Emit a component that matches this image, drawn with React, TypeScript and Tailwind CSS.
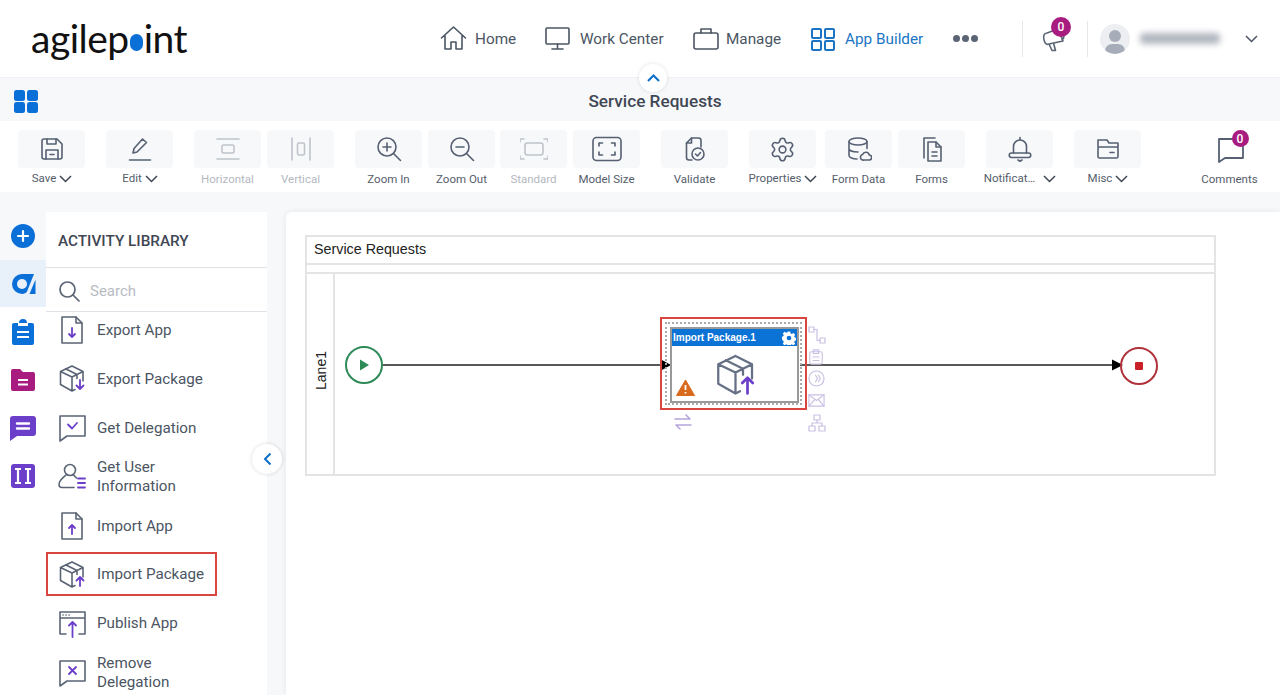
import React from "react";
import { Settings } from "lucide-react";

const S = ({ size = 24, vb, sw = 1.6, className = "", children }: { size?: number; vb?: number; sw?: number; className?: string; children: React.ReactNode }) => (
  <svg width={size} height={size} viewBox={`0 0 ${vb ?? size} ${vb ?? size}`} fill="none" stroke="currentColor" strokeWidth={sw} strokeLinecap="round" strokeLinejoin="round" className={`shrink-0 ${className}`}>
    {children}
  </svg>
);

const Chevron = ({ className = "", sw = 1.5 }: { className?: string; sw?: number }) => (
  <svg width="13" height="8" viewBox="0 0 13 8" fill="none" stroke="currentColor" strokeWidth={sw} className={className}>
    <path d="M1 1l5.500 5.500L12 1" />
  </svg>
);

const toolIcons: Record<string, React.ReactNode> = {
  save: <S size={26}><path d="M3 5a2 2 0 0 1 2-2h13l5 5v13a2 2 0 0 1-2 2H5a2 2 0 0 1-2-2z" /><path d="M8 3v5h9V3" /><path d="M7 23v-9h12v9" /><path d="M11 18.500h4" /></S>,
  edit: <S size={26}><path d="M6 17l1-4.500L15.500 3l4 3.500L10 16z" /><path d="M2.500 24h21" /></S>,
  horizontal: <S size={26}><path d="M2 3h22M2 23h22" /><rect x="7" y="9" width="12" height="8" rx="1.500" /></S>,
  vertical: <S size={26}><path d="M4 2v22M22 2v22" /><rect x="9.500" y="7" width="7" height="12" rx="1.500" /></S>,
  zoomIn: <S size={28}><circle cx="12" cy="12" r="9" /><path d="M18.500 18.500l7 7M12 8v8M8 12h8" /></S>,
  zoomOut: <S size={28}><circle cx="12" cy="12" r="9" /><path d="M18.500 18.500l7 7M8 12h8" /></S>,
  standard: <S size={28}><path d="M0 7V4h4M24 4h4v3M28 21v3h-4M4 24H0v-3" /><rect x="5" y="8" width="18" height="12" rx="2.500" /></S>,
  model: <S size={30}><rect x="1" y="3.500" width="28" height="23" rx="3.500" /><path d="M7 12V9h3.500M19.500 9H23v3M23 18v3h-3.500M10.500 21H7v-3" /></S>,
  validate: <S size={26}><path d="M10 24H7a2.500 2.500 0 0 1-2.500-2.500V7L9.500 2h7a2.500 2.500 0 0 1 2.500 2.500V11" /><path d="M9.500 2v5h-5" /><circle cx="16" cy="18" r="6" /><path d="M13.500 18l2 2 3-3.500" /></S>,
  properties: <Settings size={27} strokeWidth={1.4} />,
  formData: <S size={26}><ellipse cx="12" cy="5.500" rx="9" ry="3.500" /><path d="M3 5.500v14c0 2 3.800 3.500 8 3.500M21 5.500v7M3 12.500c0 2 3.800 3.500 9 3.500" /><path d="M18 24h5a2.500 2.500 0 0 0 .3-5 3.500 3.500 0 0 0-6.700-.5A2.800 2.800 0 0 0 18 24z" /></S>,
  forms: <S size={26}><path d="M9 6h8l5 5v14H9z" /><path d="M17 6v5h5" /><path d="M5 22V2h11M13 16h5M13 20h5" /></S>,
  bell: <S size={26}><path d="M13 1.500V4M6.500 17v-6.500a6.500 6.500 0 0 1 13 0V17" /><path d="M4.500 17h17a2 2 0 0 1 0 4.500h-17a2 2 0 0 1 0-4.500z" /><path d="M11 24l2 1.200 2-1.200" /></S>,
  misc: <S size={26}><path d="M3 11V4h9l2 3h9v4" /><rect x="3" y="11" width="20" height="11" rx="1.500" /><path d="M15 16.500h4" /></S>,
};

const tools = [
  { k: "save", label: "Save", caret: true, ml: "ml-[18px]" },
  { k: "edit", label: "Edit", caret: true, ml: "ml-[21px]" },
  { k: "horizontal", label: "Horizontal", off: true, ml: "ml-[21px]" },
  { k: "vertical", label: "Vertical", off: true, ml: "ml-[6px]" },
  { k: "zoomIn", label: "Zoom In", ml: "ml-[21px]" },
  { k: "zoomOut", label: "Zoom Out", ml: "ml-[6px]" },
  { k: "standard", label: "Standard", off: true, ml: "ml-[5px]" },
  { k: "model", label: "Model Size", ml: "ml-[6px]" },
  { k: "validate", label: "Validate", ml: "ml-[21px]" },
  { k: "properties", label: "Properties", caret: true, ml: "ml-[21px]" },
  { k: "formData", label: "Form Data", ml: "ml-[9px]" },
  { k: "forms", label: "Forms", ml: "ml-[6px]" },
  { k: "bell", label: "Notificat…", caret: true, wide: true, ml: "ml-[21px]" },
  { k: "misc", label: "Misc", caret: true, ml: "ml-[21px]" },
];

const Violet = "#6b3fc9";
const Box = () => <path d="M15 2l11 5.500V17M15 2L3.500 7.500v13L15 27l3-1.500M3.500 7.500L15 13l11-5.500M15 13v14M8.500 4.800L20 10.500v4" />;

const libIcons: Record<string, React.ReactNode> = {
  exportApp: <S size={28}><path d="M4 1h14l6 6v20H4z" /><path d="M18 1v6h6" /><path d="M14 12v9M11 18l3 3 3-3" stroke={Violet} strokeWidth={1.8} /></S>,
  exportPkg: <S size={30}><Box /><path d="M23 16v9M19.500 21.500l3.500 3.500 3.500-3.500" stroke={Violet} strokeWidth={1.8} /></S>,
  getDel: <S size={30}><path d="M3 3h25v20H10l-7 5z" /><path d="M11 11.500l4 4 5-5.500" stroke={Violet} strokeWidth={1.8} /></S>,
  user: <S size={30}><circle cx="13" cy="8" r="5.500" /><path d="M9 13c-2 2-7 5-7 9.500 0 2 1.500 3 3 3h12M16.500 13l3 3" /><path d="M21 16.500h7M21 21h7M21 25.500h7" stroke={Violet} strokeWidth={1.8} /></S>,
  importApp: <S size={28}><path d="M4 1h14l6 6v20H4z" /><path d="M18 1v6h6" /><path d="M14 22v-9M11 16l3-3 3 3" stroke={Violet} strokeWidth={1.8} /></S>,
  importPkg: <S size={30}><Box /><path d="M23 26v-9M19.500 20.500l3.500-3.500 3.500 3.500" stroke={Violet} strokeWidth={1.8} /></S>,
  publish: <S size={30}><path d="M9 25H3V3h25v22h-6M3 9h25" /><path d="M6 6h.1M9 6h.1M12 6h.1" /><path d="M15.500 28V13M12 16.500l3.500-3.500 3.500 3.500" stroke={Violet} strokeWidth={1.8} /></S>,
  removeDel: <S size={30}><path d="M3 3h25v20H10l-7 5z" /><path d="M12 9l7 7M19 9l-7 7" stroke={Violet} strokeWidth={1.8} /></S>,
};

const lib = [
  { k: "exportApp", t: ["Export App"] },
  { k: "exportPkg", t: ["Export Package"] },
  { k: "getDel", t: ["Get Delegation"] },
  { k: "user", t: ["Get User", "Information"] },
  { k: "importApp", t: ["Import App"] },
  { k: "importPkg", t: ["Import Package"] },
  { k: "publish", t: ["Publish App"] },
  { k: "removeDel", t: ["Remove", "Delegation"] },
];

const NavItem = ({ icon, label, className = "" }: { icon: React.ReactNode; label: string; className?: string }) => (
  <div className={`flex items-center text-[15.300px] ${className}`}>
    {icon}
    <span className="mt-[2px]">{label}</span>
  </div>
);

const Badge = ({ className = "" }: { className?: string }) => (
  <span className={`absolute flex items-center justify-center rounded-full bg-[#a81c80] text-[12px] font-medium text-white ${className}`}>0</span>
);

export default function App() {
  return (
    <div className="relative h-[695px] w-[1280px] overflow-hidden bg-white text-[#4b5563] font-['Roboto',sans-serif]">
      {/* top nav */}
      <header className="flex h-[77px] items-center bg-white">
        <div className="ml-[31px] flex w-[156px] items-center text-[39px] leading-none tracking-[-0.5px] text-[#111] font-['Lato',sans-serif] font-normal">
          agilep
          <span className="mx-[1px] mt-[7px] inline-block h-[17px] w-[17px] rounded-full bg-[#0b6fd8]" />
          int
        </div>
        <NavItem className="ml-[253px] w-[77px] gap-[8px]" label="Home" icon={<S size={27} sw={1.6}><path d="M1.500 13L13.500 2l12 11M5 11v13h6v-7h5v7h6V11" /></S>} />
        <NavItem className="ml-[28px] w-[119px] gap-[10px]" label="Work Center" icon={<S size={25}><rect x="1" y="2" width="23" height="16" rx="1" /><path d="M12.500 18v5M7 23h11" /></S>} />
        <NavItem className="ml-[29px] w-[89px] gap-[7px]" label="Manage" icon={<S size={26}><rect x="1" y="7" width="24" height="16" rx="2" /><path d="M8 7V3h10v4" /></S>} />
        <NavItem className="ml-[29px] w-[113px] gap-[10px] text-[#1b75c4]" label="App Builder" icon={<S size={24} sw={2}><rect x="1" y="2" width="9" height="9" rx="1" /><rect x="14" y="2" width="9" height="9" rx="1" /><rect x="1" y="14" width="9" height="9" rx="1" /><rect x="14" y="14" width="9" height="9" rx="1" /></S>} />
        <div className="ml-[29px] flex gap-[2px]">
          <span className="h-[7px] w-[7px] rounded-full bg-[#5b6475]" />
          <span className="h-[7px] w-[7px] rounded-full bg-[#5b6475]" />
          <span className="h-[7px] w-[7px] rounded-full bg-[#5b6475]" />
        </div>
        <div className="ml-[44px] h-[36px] w-px bg-[#e6e7ea]" />
        <div className="relative ml-[19px] text-[#5b6475]">
          <S size={26}><path d="M5 7c-3 0-4 3-3 7s3 5 5 4L21 15 16 3zM7 18l3 6.500h3.500L11.500 17M18.500 7.500c3.500 0 4.500 4.500 1.500 6" /></S>
          <Badge className="left-[9px] top-[-9px] h-[20px] w-[20px]" />
        </div>
        <div className="ml-[19px] h-[36px] w-px bg-[#e6e7ea]" />
        <div className="relative ml-[12px] h-[30px] w-[30px] overflow-hidden rounded-full bg-[#eceef1]">
          <span className="absolute left-[9px] top-[6px] h-[12px] w-[12px] rounded-full bg-[#a7adb8]" />
          <span className="absolute left-[5px] top-[20px] h-[14px] w-[20px] rounded-full bg-[#a7adb8]" />
        </div>
        <div className="ml-[10px] h-[11px] w-[80px] rounded bg-[#8f96a3] opacity-70 blur-[3px]" />
        <Chevron className="ml-[25px] text-[#4b5563]" />
      </header>

      {/* title bar */}
      <div className="relative flex h-[44px] items-center justify-center border-t border-[#eef0f3] bg-[#f7f8fa] pl-[30px] pt-[5px]">
        <svg width="24" height="24" viewBox="0 0 24 24" className="absolute left-[14px] top-[12px]" fill="#0b6fd8">
          <rect x="0" y="0" width="11" height="11" rx="2.500" />
          <rect x="13" y="0" width="11" height="11" rx="2.500" />
          <rect x="0" y="12" width="11" height="11" rx="2.500" />
          <rect x="13" y="12" width="11" height="11" rx="2.500" />
        </svg>
        <span className="text-[17.200px] font-medium text-[#3f4754]">Service Requests</span>
      </div>
      <button className="absolute left-[639px] top-[64px] flex h-[28px] w-[28px] items-center justify-center rounded-full bg-white shadow-[0_0_4px_rgba(0,0,0,0.12)]">
        <Chevron sw={2} className="rotate-180 text-[#0b6fc8]" />
      </button>

      {/* toolbar */}
      <div className="relative flex h-[71px] items-start bg-white pt-[9px]">
        {tools.map((t) => (
          <div key={t.k} className={`flex w-[67px] flex-col items-center ${t.ml}`}>
            <div className={`flex h-[38px] w-[67px] items-center justify-center rounded-[4px] bg-[#f7f8fa] ${t.off ? "text-[#bfc3ca]" : "text-[#566072]"}`}>
              {toolIcons[t.k]}
            </div>
            <div className={`flex h-[16px] w-[80px] items-center justify-center gap-[3px] whitespace-nowrap text-[11.500px] ${t.caret ? "mt-[3px] pl-[1px]" : "mt-[4px]"} ${t.off ? "text-[#b4b8bf]" : "text-[#555d6b]"}`}>
              {t.label}
              {t.caret && <Chevron className={`text-[#3f4754] ${t.wide ? "ml-[5px]" : ""}`} />}
            </div>
          </div>
        ))}
        <div className="ml-[60px] flex w-[57px] flex-col items-center">
          <div className="relative ml-[2px] flex h-[38px] items-center justify-center text-[#566072]">
            <S size={28} sw={1.8}><path d="M2 4h24v19H8l-6 4z" /></S>
            <Badge className="left-[15px] top-[0px] h-[17px] w-[17px]" />
          </div>
          <div className="mt-[4px] flex h-[16px] items-center whitespace-nowrap text-[11.500px] text-[#555d6b]">Comments</div>
        </div>
      </div>

      {/* body */}
      <div className="flex h-[503px] bg-[#f7f8fa]">
        <nav className="flex w-[46px] flex-col pt-[20px]">
          <div className="flex h-[48px] items-center justify-center">
            <svg width="24" height="24" viewBox="0 0 24 24"><circle cx="12" cy="12" r="12" fill="#0b6fd8" /><path d="M12 7v10M7 12h10" stroke="#fff" strokeWidth="2.200" strokeLinecap="round" /></svg>
          </div>
          <div className="flex h-[47px] items-center justify-center bg-[#e8f1fa]">
            <svg width="25" height="22" viewBox="0 0 25 22">
              <path d="M23 1H11a10 10 0 0 0 0 20c2.500 0 4-1 5-2.500z" fill="#0b6fd8" />
              <circle cx="11" cy="11" r="5" fill="#e8f1fa" />
              <path d="M24.500 6.500V21h-6z" fill="#0b6fd8" />
            </svg>
          </div>
          <div className="flex flex-1 flex-col bg-white">
            <div className="flex h-[50px] items-center justify-center">
              <svg width="24" height="26" viewBox="0 0 24 26"><path d="M3 4h5a4 4 0 0 1 8 0h5a2 2 0 0 1 2 2v18a2 2 0 0 1-2 2H3a2 2 0 0 1-2-2V6a2 2 0 0 1 2-2z" fill="#0b6fd8" /><path d="M7 4h10v3H7z" fill="#fff" /><path d="M6 13h12M6 18h12" stroke="#fff" strokeWidth="2.200" /></svg>
            </div>
            <div className="flex h-[46px] items-center justify-center">
              <svg width="24" height="22" viewBox="0 0 24 22"><path d="M2 0h7l3 3h10a2 2 0 0 1 2 2v15a2 2 0 0 1-2 2H2a2 2 0 0 1-2-2V2a2 2 0 0 1 2-2z" fill="#a81c80" /><path d="M7 11h10M7 15.500h10" stroke="#fff" strokeWidth="2.200" /></svg>
            </div>
            <div className="flex h-[50px] items-center justify-center">
              <svg width="26" height="25" viewBox="0 0 26 25"><path d="M3 0h20a3 3 0 0 1 3 3v14a3 3 0 0 1-3 3H7l-7 5V3a3 3 0 0 1 3-3z" fill="#6b3fc9" /><path d="M7 7.500h12M7 12.500h12" stroke="#fff" strokeWidth="2.400" strokeLinecap="round" /></svg>
            </div>
            <div className="flex h-[46px] items-center justify-center">
              <svg width="24" height="24" viewBox="0 0 24 24"><rect width="24" height="24" rx="3" fill="#6b3fc9" /><path d="M4 5h6M7 5v14M4 19h6M14 5h6M17 5v14M14 19h6" stroke="#fff" strokeWidth="2.200" /></svg>
            </div>
          </div>
        </nav>

        {/* activity library */}
        <aside className="mt-[20px] w-[221px] bg-white">
          <div className="flex h-[56px] items-center border-b border-[#dfe1e6] pl-[12px] pt-[3px] text-[15.300px] font-medium text-[#3f4754]">ACTIVITY LIBRARY</div>
          <div className="flex h-[44px] items-center gap-[10px] border-b border-[#dfe1e6] pl-[12px] pt-[3px]">
            <S size={22} sw={1.7} className="text-[#5b6475]"><circle cx="9.500" cy="9.500" r="7.500" /><path d="M15 15l6 6" /></S>
            <span className="text-[15px] text-[#b8bcc3]">Search</span>
          </div>
          <div className="-mt-[6px]">
            {lib.map((it) => (
              <div key={it.k} className="relative flex h-[48.900px] items-center">
                <div className="flex w-[51px] shrink-0 justify-center text-[#5b6475]">{libIcons[it.k]}</div>
                <div className="text-[15.200px] leading-[19px] text-[#4b5563]">
                  {it.t.map((l) => (
                    <div key={l}>{l}</div>
                  ))}
                </div>
                {it.k === "importPkg" && <div className="absolute left-0 top-[1.500px] h-[44px] w-[171px] border-2 border-[#d9463f]" />}
              </div>
            ))}
          </div>
        </aside>

        {/* canvas */}
        <main className="relative ml-[19px] mt-[20px] flex-1 rounded-tl-[6px] bg-white pl-[19px] pt-[23px] shadow-[0_0_6px_rgba(0,0,0,0.08)]">
          <div className="relative h-[241px] w-[911px] border-2 border-[#e4e4e4] font-['Liberation_Sans',sans-serif] text-[#222]">
            <div className="flex h-[28px] items-center border-b-2 border-[#e4e4e4] pl-[7px] text-[14.300px]">Service Requests</div>
            <div className="h-[9px] border-b-2 border-[#e4e4e4]" />
            <div className="absolute bottom-0 left-[26px] top-[37px] w-[2px] bg-[#e4e4e4]" />
            <span className="absolute left-[-14px] top-[123px] w-[56px] -rotate-90 text-center text-[14px]">Lane1</span>
            <svg className="absolute left-0 top-0" width="907" height="237" viewBox="0 0 907 237" fill="none">
              <circle cx="57" cy="128" r="18" stroke="#2e8b57" strokeWidth="2" />
              <path d="M53 122.500v11l9-5.500z" fill="#2e8b57" />
              <path d="M76 128h280M493 128h322" stroke="#222" strokeWidth="1.300" />
              <path d="M354 122.500v11l10-5.500zM805 122.500v11l11-5.500z" fill="#000" />
              <circle cx="832" cy="129" r="18" stroke="#b0323a" strokeWidth="2" />
              <rect x="828" y="125" width="8" height="8" rx="1" fill="#cb2027" />
            </svg>

            {/* selected activity */}
            <div className="absolute left-[353px] top-[80px] h-[93px] w-[147px] border-2 border-[#d9463f] p-[3px]">
              <div className="h-full w-full border-2 border-dotted border-[#ababab] px-[3px] pt-[3px]">
                <div className="relative h-[76px] w-[129px] border-2 border-[#999] bg-white">
                  <div className="flex h-[17px] items-center justify-between bg-[#0b72d6] pl-[1px] pr-[1px] text-[10px] font-bold text-white">
                    Import Package.1
                    <svg width="14" height="14" viewBox="0 0 24 24" fill="#fff"><path d="M10 1h4l.8 3.200 2 .9 2.900-1.700 2.900 2.900-1.700 2.900.9 2 3.200.8v4l-3.200.8-.9 2 1.700 2.900-2.900 2.900-2.900-1.700-2 .9-.8 3.200h-4l-.8-3.200-2-.9-2.900 1.700-2.900-2.900 1.700-2.900-.9-2L-1 14v-4l3.200-.8.9-2L1.400 4.300l2.900-2.900 2.900 1.700 2-.9z" /><circle cx="12" cy="12" r="4" fill="#0b72d6" /></svg>
                  </div>
                  <div className="absolute left-[41px] top-[24px] text-[#667085]">
                    <S size={45} vb={30} sw={1.500}><Box /><path d="M23 27V16.500M19.500 20l3.500-3.500 3.500 3.500" stroke={Violet} strokeWidth={1.800} /></S>
                  </div>
                  <svg className="absolute left-[4px] top-[50px]" width="19" height="17" viewBox="0 0 19 17"><path d="M9.500 1L18.500 16.500H.5z" fill="#d9691c" stroke="#d9691c" strokeLinejoin="round" /><path d="M9.500 6v5M9.500 13v1.500" stroke="#fff" strokeWidth="1.800" /></svg>
                </div>
              </div>
            </div>

            {/* activity handles */}
            <div className="absolute left-[501px] top-[89px] flex flex-col gap-[5px] text-[#c9bfe3]">
              <S size={18} sw={1.200}><rect x="1" y="1" width="5" height="5" /><rect x="12" y="12" width="5" height="5" /><path d="M6 3.500h3v11h3" /></S>
              <S size={16} vb={18} sw={1.200}><rect x="2" y="3" width="14" height="14" rx="2" /><rect x="6" y="1" width="6" height="4" /><path d="M5.500 9h7M5.500 13h7" /></S>
              <S size={17} vb={18} sw={1.200}><circle cx="9" cy="9" r="8" /><path d="M8 5.500L10 9l-2 3.500M11 5.500L13 9l-2 3.500" /></S>
              <S size={17} vb={18} sw={1.200}><rect x="1" y="3" width="16" height="12" /><path d="M1 3l8 6 8-6M1 15l6-7M17 15l-6-7" /></S>
              <S size={18} sw={1.200}><rect x="6" y="1" width="6" height="5" /><rect x="1" y="12" width="6" height="5" /><rect x="11" y="12" width="6" height="5" /><path d="M9 6v3M4 12V9h10v3" /></S>
            </div>
            <div className="absolute left-[367px] top-[176px] text-[#b5a5dc]">
              <S size={18} sw={1.600}><path d="M1 6h15M12 2l4 4M17 12H2M6 16l-4-4" /></S>
            </div>
          </div>
        </main>
      </div>

      <button className="absolute left-[252px] top-[444px] flex h-[30px] w-[30px] items-center justify-center rounded-full bg-white shadow-[0_0_4px_rgba(0,0,0,0.15)]">
        <Chevron sw={2} className="rotate-90 text-[#0b6fc8]" />
      </button>
    </div>
  );
}
